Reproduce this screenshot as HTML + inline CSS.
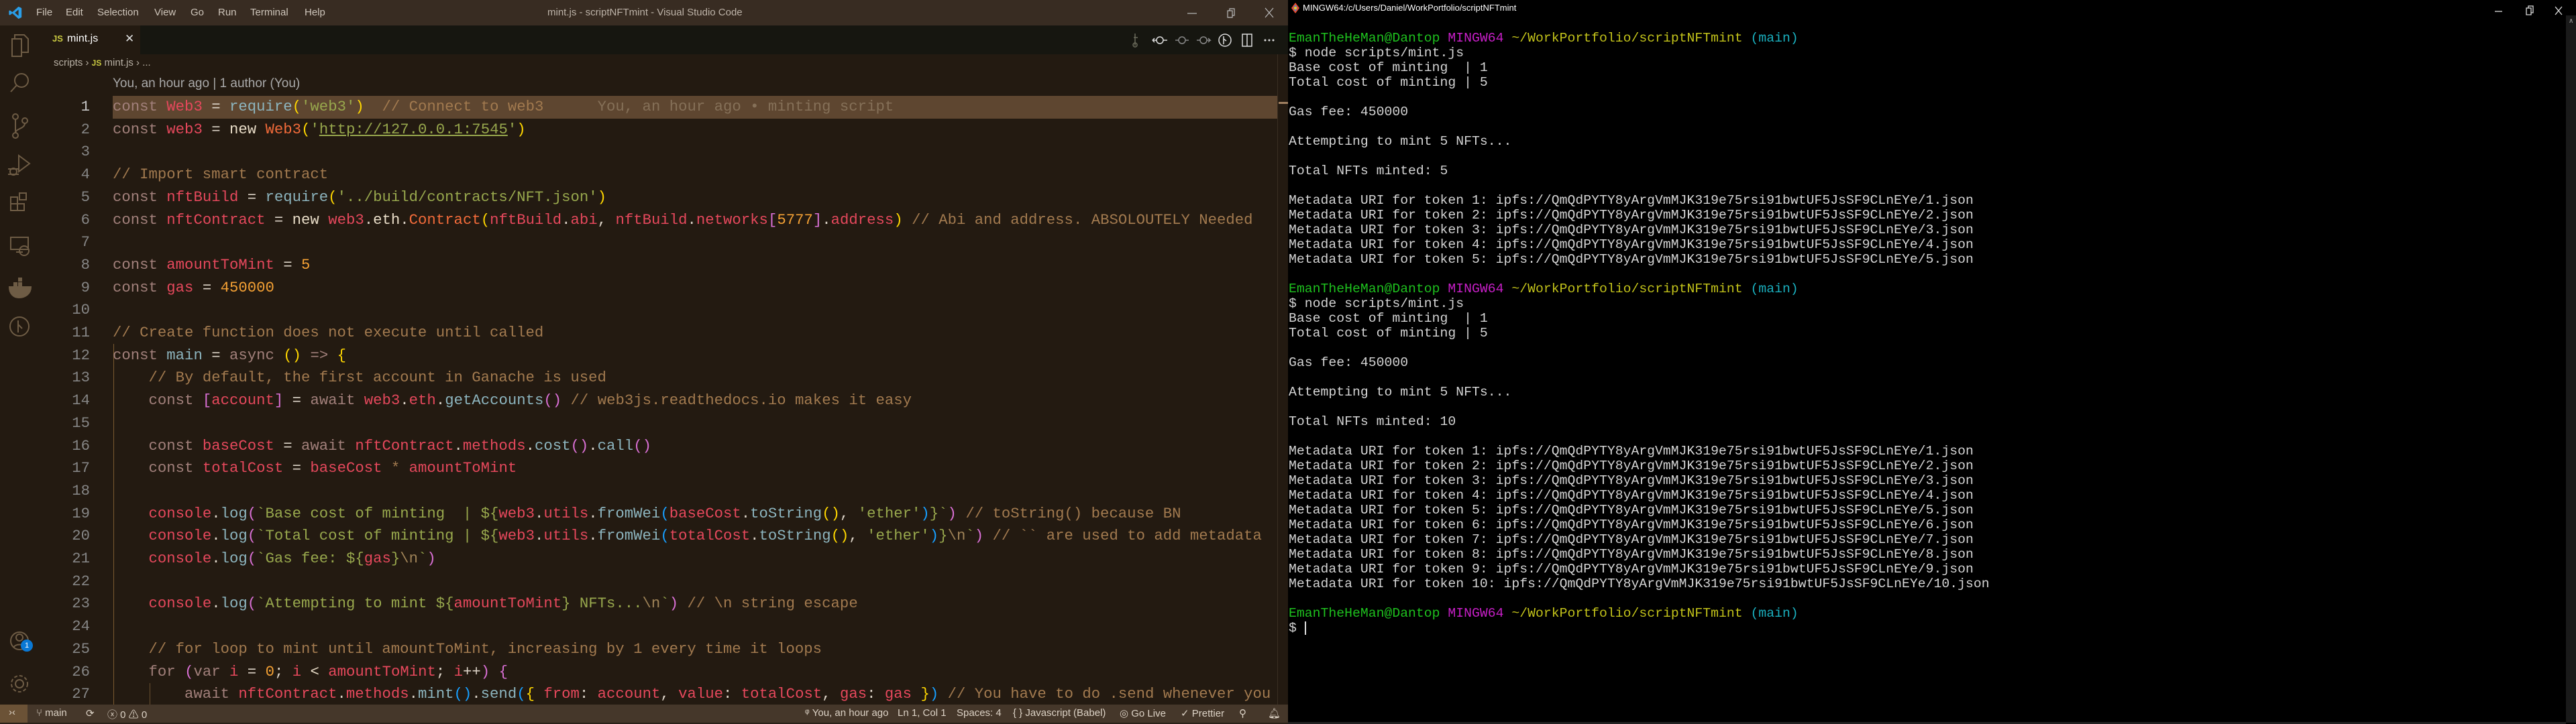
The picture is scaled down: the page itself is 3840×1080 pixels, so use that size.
<!DOCTYPE html>
<html><head><meta charset="utf-8">
<style>
*{margin:0;padding:0;box-sizing:border-box}
html,body{width:3840px;height:1080px;overflow:hidden;background:#000}
body{position:relative;font-family:"Liberation Sans",sans-serif}
.abs{position:absolute}
#vs{left:0;top:0;width:1920px;height:1080px;background:#231a11;overflow:hidden}
#title{left:0;top:0;width:1920px;height:38px;background:#382c22;color:#cfc6bb;font-size:15px}
#title span{position:absolute;top:10px}
#tabs{left:0;top:38px;width:1920px;height:43px;background:#161610}
#tab{left:58px;top:38px;width:151px;height:43px;background:#231a11}
#act{left:0;top:38px;width:58px;height:1013px;background:#231a11}
.code{position:absolute;left:168px;font-family:"Liberation Mono",monospace;font-size:22.3px;line-height:33.7px;height:33.7px;white-space:pre;color:#ddd4c8}
.ln{position:absolute;left:60px;width:74px;text-align:right;font-family:"Liberation Mono",monospace;font-size:22.3px;line-height:33.7px;color:#858585}
.k{color:#a2807b}.v{color:#e5485c}.f{color:#8db5bf}.s{color:#98a84d}.c{color:#a27a4f}.n{color:#f3a034}.w{color:#e9ddc8}.o{color:#f26b3a}
.y{color:#ffd700}.p{color:#da70d6}.b{color:#179fff}.e{color:#a08458}
#status{left:0;top:1051px;width:1920px;height:27px;background:#45372a;color:#ddd3c6;font-size:15px}
#status span{position:absolute;top:4px}
#term{left:1920px;top:0;width:1920px;height:1080px;background:#000}
.t{position:absolute;left:1921px;font-family:"Liberation Mono",monospace;font-size:19.8px;line-height:22px;height:22px;white-space:pre;color:#d4d4d4}
.g{color:#1ec11e}.m{color:#c71fc7}.yy{color:#c2c21a}.cy{color:#1ab0bf}
svg{position:absolute}
</style></head><body>
<div id="vs" class="abs">
<div id="title" class="abs">
<svg style="left:12px;top:8px" width="22" height="22" viewBox="0 0 24 24"><path d="M17 2 L22 4.5 V19.5 L17 22 L7 13 L3 16 L1.5 15 V9 L3 8 L7 11 L17 2 Z M17 7 L11 12 L17 17 Z" fill="#2a9ee8"/></svg>
<span style="left:54px">File</span><span style="left:98px">Edit</span><span style="left:145px">Selection</span><span style="left:230px">View</span><span style="left:284px">Go</span><span style="left:325px">Run</span><span style="left:373px">Terminal</span><span style="left:454px">Help</span>
<span style="left:816px;color:#bdb3a8">mint.js - scriptNFTmint - Visual Studio Code</span>
<svg style="left:1768px;top:12px" width="18" height="14"><path d="M2 8H16" stroke="#bbb" stroke-width="1.2"/></svg>
<svg style="left:1826px;top:11px" width="18" height="18"><path d="M4 5H11V15H4Z M7 5V2H14V12H11" stroke="#bbb" fill="none" stroke-width="1.2"/></svg>
<svg style="left:1883px;top:10px" width="18" height="18"><path d="M3 2L15 16M15 2L3 16" stroke="#bbb" stroke-width="1.2"/></svg>
</div>
<div id="tabs" class="abs"></div>
<div id="tab" class="abs">
<span class="abs" style="left:20px;top:12px;color:#cbcb41;font-size:13px;font-weight:bold">JS</span>
<span class="abs" style="left:42px;top:11px;color:#fff;font-size:16px">mint.js</span>
<span class="abs" style="left:128px;top:10px;color:#ddd;font-size:17px">✕</span>
</div>
<!-- editor toolbar icons -->
<svg style="left:1680px;top:46px" width="230" height="28" fill="none" stroke-width="1.5">
<g stroke="#6a6a5a"><path d="M12 4v18M10 10h6M12 18a3 3 0 1 0 0.1 0"/></g>
<g stroke="#ddd"><circle cx="49" cy="14" r="5"/><path d="M38 14h6M54 14h6M38 14l3-3M38 14l3 3"/></g>
<g stroke="#888"><circle cx="82" cy="14" r="5"/><path d="M72 14h5M87 14h5"/></g>
<g stroke="#888"><circle cx="114" cy="14" r="5"/><path d="M104 14h5M119 14h5l-3-3M124 14l-3 3"/></g>
<g stroke="#ddd"><circle cx="146" cy="14" r="9"/><path d="M144 8v12M144 12l4 3"/></g>
<g stroke="#ddd"><rect x="172" y="5" width="14" height="18"/><path d="M179 5v18"/></g>
<g fill="#ddd" stroke="none"><circle cx="206" cy="14" r="1.5"/><circle cx="212" cy="14" r="1.5"/><circle cx="218" cy="14" r="1.5"/></g>
</svg>
<div id="act" class="abs"></div>
<!-- activity icons -->
<svg style="left:0;top:38px" width="58" height="1013" fill="none" stroke="#6e5c45" stroke-width="2">
<path d="M18 20h14v26H18z M22 20v-6h14l6 6v20h-10"/>
<circle cx="32" cy="82" r="10"/><path d="M25 89l-9 10"/>
<circle cx="23" cy="136" r="4"/><circle cx="23" cy="164" r="4"/><circle cx="37" cy="142" r="4"/><path d="M23 140v20M37 146c0 8-14 8-14 14"/>
<path d="M28 194l16 12-16 12z"/><circle cx="20" cy="218" r="5"/><path d="M12 214h16M12 222h16"/>
<path d="M16 256h10v10h-10zM26 266h10v10h-10zM16 266h10v10h-10zM29 250h10v10h-10z"/>
<path d="M16 316h26v18h-26zM24 338h10"/><circle cx="36" cy="336" r="7"/>
<path d="M14 390h32c0 10-8 16-18 16-8 0-14-6-14-16z" fill="#6e5c45"/><path d="M20 383h6v6h-6zM27 383h6v6h-6zM27 376h6v6h-6z" fill="#6e5c45" stroke="none"/>
<circle cx="29" cy="449" r="14"/><path d="M27 440v18M27 446l6 6"/>
<circle cx="29" cy="918" r="13"/><circle cx="29" cy="913" r="5"/><path d="M20 928c3-6 15-6 18 0"/>
<circle cx="29" cy="982" r="6"/><circle cx="29" cy="982" r="12" stroke-dasharray="5 3"/>
</svg>
<div class="abs" style="left:31px;top:954px;width:18px;height:18px;border-radius:9px;background:#0a78d4;color:#fff;font-size:11px;text-align:center;line-height:18px">1</div>
<!-- breadcrumb -->
<div class="abs" style="left:80px;top:85px;font-size:15px;color:#b8b0a4">scripts ›  <b style="color:#cbcb41;font-size:12px">JS</b> mint.js › ...</div>
<div class="abs" style="left:168px;top:114px;font-size:19px;color:#a9a9a9">You, an hour ago | 1 author (You)</div>
<!-- line highlight -->
<div class="abs" style="left:168px;top:143px;width:1736px;height:34px;background:#5e4630"></div>
<!-- indent guides -->
<div class="abs" style="left:169px;top:513px;width:1px;height:538px;background:#7a5a30"></div>
<div class="abs" style="left:223px;top:1019px;width:1px;height:32px;background:#6a5030"></div>
<div class="abs" style="left:1904px;top:81px;width:1px;height:970px;background:#3a2e22"></div>
<div class="abs" style="left:1906px;top:152px;width:14px;height:3px;background:#a08060"></div>
<div id="lines"></div>
<div class="ln" style="top:143px;color:#c6c6c6">1</div><div class="code" style="top:143px"><span class="k">const</span> <span class="v">Web3</span> = <span class="f">require</span><span class="y">(</span><span class="s">'web3'</span><span class="y">)</span>  <span class="c">// Connect to web3</span>      <span style="color:#857058">You, an hour ago • minting script</span></div>
<div class="ln" style="top:176.7px">2</div><div class="code" style="top:176.7px"><span class="k">const</span> <span class="v">web3</span> = <span class="w">new</span> <span class="o">Web3</span><span class="y">(</span><span class="s">'<u>http://127.0.0.1:7545</u>'</span><span class="y">)</span></div>
<div class="ln" style="top:210.4px">3</div>
<div class="ln" style="top:244.1px">4</div><div class="code" style="top:244.1px"><span class="c">// Import smart contract</span></div>
<div class="ln" style="top:277.8px">5</div><div class="code" style="top:277.8px"><span class="k">const</span> <span class="v">nftBuild</span> = <span class="f">require</span><span class="y">(</span><span class="s">'../build/contracts/NFT.json'</span><span class="y">)</span></div>
<div class="ln" style="top:311.5px">6</div><div class="code" style="top:311.5px"><span class="k">const</span> <span class="v">nftContract</span> = <span class="w">new</span> <span class="v">web3</span>.<span class="w">eth</span>.<span class="o">Contract</span><span class="y">(</span><span class="v">nftBuild</span>.<span class="v">abi</span>, <span class="v">nftBuild</span>.<span class="v">networks</span><span class="p">[</span><span class="n">5777</span><span class="p">]</span>.<span class="v">address</span><span class="y">)</span> <span class="c">// Abi and address. ABSOLOUTELY Needed</span></div>
<div class="ln" style="top:345.2px">7</div>
<div class="ln" style="top:378.9px">8</div><div class="code" style="top:378.9px"><span class="k">const</span> <span class="v">amountToMint</span> = <span class="n">5</span></div>
<div class="ln" style="top:412.6px">9</div><div class="code" style="top:412.6px"><span class="k">const</span> <span class="v">gas</span> = <span class="n">450000</span></div>
<div class="ln" style="top:446.3px">10</div>
<div class="ln" style="top:480px">11</div><div class="code" style="top:480px"><span class="c">// Create function does not execute until called</span></div>
<div class="ln" style="top:513.7px">12</div><div class="code" style="top:513.7px"><span class="k">const</span> <span class="f">main</span> = <span class="k">async</span> <span class="y">()</span> <span class="k">=&gt;</span> <span class="y">{</span></div>
<div class="ln" style="top:547.4px">13</div><div class="code" style="top:547.4px">    <span class="c">// By default, the first account in Ganache is used</span></div>
<div class="ln" style="top:581.1px">14</div><div class="code" style="top:581.1px">    <span class="k">const</span> <span class="p">[</span><span class="v">account</span><span class="p">]</span> = <span class="k">await</span> <span class="v">web3</span>.<span class="v">eth</span>.<span class="f">getAccounts</span><span class="p">()</span> <span class="c">// web3js.readthedocs.io makes it easy</span></div>
<div class="ln" style="top:614.8px">15</div>
<div class="ln" style="top:648.5px">16</div><div class="code" style="top:648.5px">    <span class="k">const</span> <span class="v">baseCost</span> = <span class="k">await</span> <span class="v">nftContract</span>.<span class="v">methods</span>.<span class="f">cost</span><span class="p">()</span>.<span class="f">call</span><span class="p">()</span></div>
<div class="ln" style="top:682.2px">17</div><div class="code" style="top:682.2px">    <span class="k">const</span> <span class="v">totalCost</span> = <span class="v">baseCost</span> <span class="c">*</span> <span class="v">amountToMint</span></div>
<div class="ln" style="top:715.9px">18</div>
<div class="ln" style="top:749.6px">19</div><div class="code" style="top:749.6px">    <span class="v">console</span>.<span class="f">log</span><span class="p">(</span><span class="s">`Base cost of minting  | ${</span><span class="v">web3</span>.<span class="v">utils</span>.<span class="f">fromWei</span><span class="b">(</span><span class="v">baseCost</span>.<span class="f">toString</span><span class="y">()</span>, <span class="s">'ether'</span><span class="b">)</span><span class="s">}`</span><span class="p">)</span> <span class="c">// toString() because BN</span></div>
<div class="ln" style="top:783.3px">20</div><div class="code" style="top:783.3px">    <span class="v">console</span>.<span class="f">log</span><span class="p">(</span><span class="s">`Total cost of minting | ${</span><span class="v">web3</span>.<span class="v">utils</span>.<span class="f">fromWei</span><span class="b">(</span><span class="v">totalCost</span>.<span class="f">toString</span><span class="y">()</span>, <span class="s">'ether'</span><span class="b">)</span><span class="s">}</span><span class="e">\n</span><span class="s">`</span><span class="p">)</span> <span class="c">// `` are used to add metadata</span></div>
<div class="ln" style="top:817px">21</div><div class="code" style="top:817px">    <span class="v">console</span>.<span class="f">log</span><span class="p">(</span><span class="s">`Gas fee: ${</span><span class="v">gas</span><span class="s">}</span><span class="e">\n</span><span class="s">`</span><span class="p">)</span></div>
<div class="ln" style="top:850.7px">22</div>
<div class="ln" style="top:884.4px">23</div><div class="code" style="top:884.4px">    <span class="v">console</span>.<span class="f">log</span><span class="p">(</span><span class="s">`Attempting to mint ${</span><span class="v">amountToMint</span><span class="s">} NFTs...</span><span class="e">\n</span><span class="s">`</span><span class="p">)</span> <span class="c">// \n string escape</span></div>
<div class="ln" style="top:918.1px">24</div>
<div class="ln" style="top:951.8px">25</div><div class="code" style="top:951.8px">    <span class="c">// for loop to mint until amountToMint, increasing by 1 every time it loops</span></div>
<div class="ln" style="top:985.5px">26</div><div class="code" style="top:985.5px">    <span class="k">for</span> <span class="p">(</span><span class="k">var</span> <span class="v">i</span> = <span class="n">0</span>; <span class="v">i</span> <span class="w">&lt;</span> <span class="v">amountToMint</span>; <span class="v">i</span>++<span class="p">)</span> <span class="p">{</span></div>
<div class="ln" style="top:1019.2px">27</div><div class="code" style="top:1019.2px;width:1736px;overflow:hidden">        <span class="k">await</span> <span class="v">nftContract</span>.<span class="v">methods</span>.<span class="f">mint</span><span class="b">()</span>.<span class="f">send</span><span class="b">(</span><span class="y">{</span> <span class="v">from</span>: <span class="v">account</span>, <span class="v">value</span>: <span class="v">totalCost</span>, <span class="v">gas</span>: <span class="v">gas</span> <span class="y">}</span><span class="b">)</span> <span class="c">// You have to do .send whenever you</span></div>
<div id="status" class="abs">
<div class="abs" style="left:0;top:0;width:41px;height:27px;background:#6b5236"></div>
<span style="left:13px;top:3px">›‹</span>
<span style="left:54px">⑂ main</span>
<span style="left:128px">⟳</span>
<span style="left:160px">ⓧ 0 ⚠ 0</span>
<span style="left:1200px">ᵠ You, an hour ago</span>
<span style="left:1338px">Ln 1, Col 1</span>
<span style="left:1426px">Spaces: 4</span>
<span style="left:1510px">{ }  Javascript (Babel)</span>
<span style="left:1669px">◎ Go Live</span>
<span style="left:1760px">✓ Prettier</span>
<span style="left:1847px">⚲</span>
<span style="left:1890px">🔔︎</span>
</div>
<div class="abs" style="left:0;top:1078px;width:1920px;height:2px;background:#2a2218"></div>
</div>
<div id="term" class="abs"></div>
<svg style="left:1924px;top:3px" width="14" height="18"><path d="M7 1L13 9L7 17L1 9Z" fill="#e84d31"/><path d="M7 4L10 9L7 14L4 9Z" fill="#3b8eea"/><circle cx="7" cy="9" r="2" fill="#f5c518"/></svg>
<div class="abs" style="left:1942px;top:4px;font-size:13px;color:#fff">MINGW64:/c/Users/Daniel/WorkPortfolio/scriptNFTmint</div>
<svg style="left:3714px;top:6px" width="120" height="20"><path d="M5 11H16" stroke="#ddd" stroke-width="1.3"/><path d="M52 6h7v10h-7z M55 6v-3h7v10h-3" stroke="#ddd" fill="none" stroke-width="1.3"/><path d="M95 4l10 12M105 4l-10 12" stroke="#ddd" stroke-width="1.3"/></svg>
<div class="abs" style="left:3825px;top:23px;width:15px;height:1055px;background:#1a1a1a"></div>
<div class="abs" style="left:3829px;top:26px;color:#aaa;font-size:10px">∧</div>
<div class="abs" style="left:1920px;top:1077px;width:1905px;height:3px;background:#222"></div>
<div class="t" style="top:46px"><span class="g">EmanTheHeMan@Dantop</span> <span class="m">MINGW64</span> <span class="yy">~/WorkPortfolio/scriptNFTmint</span> <span class="cy">(main)</span></div>
<div class="t" style="top:68px">$ node scripts/mint.js</div>
<div class="t" style="top:90px">Base cost of minting  | 1</div>
<div class="t" style="top:112px">Total cost of minting | 5</div>
<div class="t" style="top:156px">Gas fee: 450000</div>
<div class="t" style="top:200px">Attempting to mint 5 NFTs...</div>
<div class="t" style="top:244px">Total NFTs minted: 5</div>
<div class="t" style="top:288px">Metadata URI for token 1: ipfs://QmQdPYTY8yArgVmMJK319e75rsi91bwtUF5JsSF9CLnEYe/1.json</div>
<div class="t" style="top:310px">Metadata URI for token 2: ipfs://QmQdPYTY8yArgVmMJK319e75rsi91bwtUF5JsSF9CLnEYe/2.json</div>
<div class="t" style="top:332px">Metadata URI for token 3: ipfs://QmQdPYTY8yArgVmMJK319e75rsi91bwtUF5JsSF9CLnEYe/3.json</div>
<div class="t" style="top:354px">Metadata URI for token 4: ipfs://QmQdPYTY8yArgVmMJK319e75rsi91bwtUF5JsSF9CLnEYe/4.json</div>
<div class="t" style="top:376px">Metadata URI for token 5: ipfs://QmQdPYTY8yArgVmMJK319e75rsi91bwtUF5JsSF9CLnEYe/5.json</div>
<div class="t" style="top:420px"><span class="g">EmanTheHeMan@Dantop</span> <span class="m">MINGW64</span> <span class="yy">~/WorkPortfolio/scriptNFTmint</span> <span class="cy">(main)</span></div>
<div class="t" style="top:442px">$ node scripts/mint.js</div>
<div class="t" style="top:464px">Base cost of minting  | 1</div>
<div class="t" style="top:486px">Total cost of minting | 5</div>
<div class="t" style="top:530px">Gas fee: 450000</div>
<div class="t" style="top:574px">Attempting to mint 5 NFTs...</div>
<div class="t" style="top:618px">Total NFTs minted: 10</div>
<div class="t" style="top:662px">Metadata URI for token 1: ipfs://QmQdPYTY8yArgVmMJK319e75rsi91bwtUF5JsSF9CLnEYe/1.json</div>
<div class="t" style="top:684px">Metadata URI for token 2: ipfs://QmQdPYTY8yArgVmMJK319e75rsi91bwtUF5JsSF9CLnEYe/2.json</div>
<div class="t" style="top:706px">Metadata URI for token 3: ipfs://QmQdPYTY8yArgVmMJK319e75rsi91bwtUF5JsSF9CLnEYe/3.json</div>
<div class="t" style="top:728px">Metadata URI for token 4: ipfs://QmQdPYTY8yArgVmMJK319e75rsi91bwtUF5JsSF9CLnEYe/4.json</div>
<div class="t" style="top:750px">Metadata URI for token 5: ipfs://QmQdPYTY8yArgVmMJK319e75rsi91bwtUF5JsSF9CLnEYe/5.json</div>
<div class="t" style="top:772px">Metadata URI for token 6: ipfs://QmQdPYTY8yArgVmMJK319e75rsi91bwtUF5JsSF9CLnEYe/6.json</div>
<div class="t" style="top:794px">Metadata URI for token 7: ipfs://QmQdPYTY8yArgVmMJK319e75rsi91bwtUF5JsSF9CLnEYe/7.json</div>
<div class="t" style="top:816px">Metadata URI for token 8: ipfs://QmQdPYTY8yArgVmMJK319e75rsi91bwtUF5JsSF9CLnEYe/8.json</div>
<div class="t" style="top:838px">Metadata URI for token 9: ipfs://QmQdPYTY8yArgVmMJK319e75rsi91bwtUF5JsSF9CLnEYe/9.json</div>
<div class="t" style="top:860px">Metadata URI for token 10: ipfs://QmQdPYTY8yArgVmMJK319e75rsi91bwtUF5JsSF9CLnEYe/10.json</div>
<div class="t" style="top:904px"><span class="g">EmanTheHeMan@Dantop</span> <span class="m">MINGW64</span> <span class="yy">~/WorkPortfolio/scriptNFTmint</span> <span class="cy">(main)</span></div>
<div class="t" style="top:926px">$ <span style="display:inline-block;width:2px;height:20px;background:#ddd;vertical-align:middle"></span></div>
</body></html>
